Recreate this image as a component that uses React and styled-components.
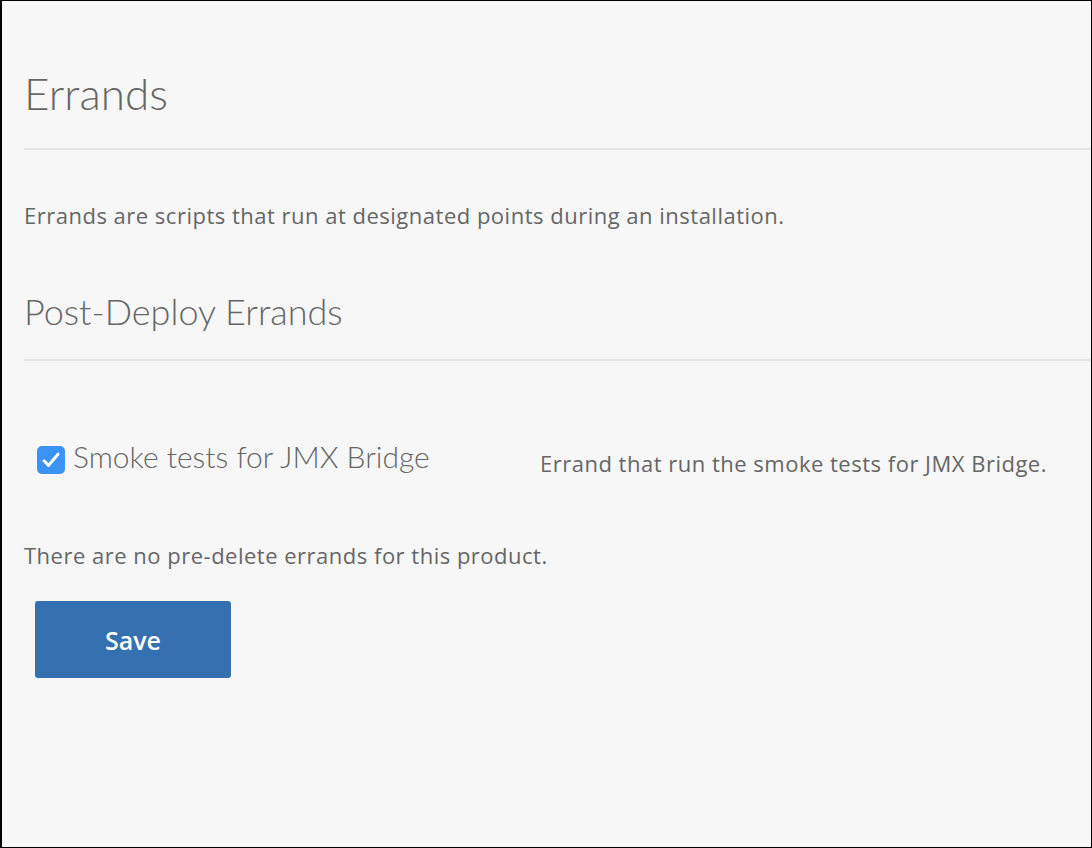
import React, { useState } from "react";
import styled, { createGlobalStyle } from "styled-components";

const GlobalStyle = createGlobalStyle`
  html, body {
    margin: 0;
    padding: 0;
    background: #f7f7f7;
  }
  body {
    font-family: "Open Sans", Lato, sans-serif;
    color: #666666;
  }
`;

const Frame = styled.div`
  box-sizing: border-box;
  width: 1092px;
  height: 848px;
  border: 1px solid #000;
  border-left-width: 2px;
  background: #f7f7f7;
  padding: 65px 0 0 22px;
  overflow: hidden;
`;

const Title = styled.h1`
  margin: ${(p) => p.above || 0}px 0 0;
  font-family: Lato, "Open Sans", sans-serif;
  font-weight: 300;
  font-size: ${(p) => p.size}px;
  line-height: ${(p) => p.lh}px;
  color: #666666;
  padding-bottom: ${(p) => p.below}px;
  border-bottom: 2px solid #e3e3e3;
`;

const Text = styled.p`
  margin: ${(p) => p.above || 0}px 0 0;
  font-size: 22px;
  font-weight: 500;
  line-height: 28px;
  letter-spacing: 0.5px;
  color: #666666;
`;

const ErrandRow = styled.div`
  display: flex;
  align-items: flex-start;
  padding: 77px 0 0 13px;
`;

const CheckLabel = styled.label`
  display: flex;
  align-items: flex-start;
  gap: 8px;
  width: 503px;
  font-family: Lato, "Open Sans", sans-serif;
  font-size: 30px;
  line-height: 36px;
  font-weight: 300;
  color: #666666;
  cursor: pointer;
`;

const Box = styled.span`
  flex: none;
  display: inline-flex;
  align-items: center;
  justify-content: center;
  margin-top: 8px;
  width: 28px;
  height: 28px;
  border-radius: 5px;
  background: ${(p) => (p.checked ? "#3b93f5" : "#ffffff")};
  border: ${(p) => (p.checked ? "none" : "1px solid #aaa")};
  box-sizing: border-box;
`;

const Description = styled.span`
  margin-top: 11px;
  font-size: 22px;
  font-weight: 500;
  line-height: 28px;
  letter-spacing: 0.5px;
  color: #666666;
`;

const SaveButton = styled.button`
  display: block;
  margin: 32px 0 0 11px;
  width: 196px;
  height: 77px;
  border: none;
  border-radius: 3px;
  background: #3571b0;
  color: #ffffff;
  font-family: "Open Sans", Lato, sans-serif;
  font-size: 25px;
  font-weight: 600;
  cursor: pointer;
`;

export default function App() {
  const [checked, setChecked] = useState(true);
  return (
    <>
      <GlobalStyle />
      <Frame>
        <Title size={44} lh={54} below={28}>Errands</Title>
        <Text above={51}>Errands are scripts that run at designated points during an installation.</Text>
        <Title size={36} lh={44} below={26} above={60}>Post-Deploy Errands</Title>
        <ErrandRow>
          <CheckLabel onClick={() => setChecked(!checked)}>
            <Box checked={checked}>
              {checked && (
                <svg width="20" height="18" viewBox="0 0 20 18">
                  <path d="M3 9.8 L7.6 14.4 L17 3.2" fill="none" stroke="#fff" strokeWidth="3" strokeLinecap="round" strokeLinejoin="round" />
                </svg>
              )}
            </Box>
            Smoke tests for JMX Bridge
          </CheckLabel>
          <Description>Errand that run the smoke tests for JMX Bridge.</Description>
        </ErrandRow>
        <Text above={64}>There are no pre-delete errands for this product.</Text>
        <SaveButton>Save</SaveButton>
      </Frame>
    </>
  );
}
